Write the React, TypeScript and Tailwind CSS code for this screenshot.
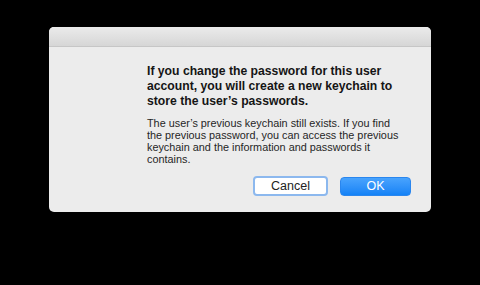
const copy = {
  heading: [
    "If you change the password for this user",
    "account, you will create a new keychain to",
    "store the user\u2019s passwords.",
  ],
  body: [
    "The user\u2019s previous keychain still exists. If you find",
    "the previous password, you can access the previous",
    "keychain and the information and passwords it",
    "contains.",
  ],
};

export default function App() {
  return (
    <div className="min-h-screen w-[480px] bg-black pt-[27px] pl-[49px] font-['Liberation_Sans',sans-serif]">
      <Dialog />
    </div>
  );
}

const Dialog = () => {
  return (
    <div className="w-[382px] h-[185px] rounded-[5px] overflow-hidden bg-[#ececec] flex flex-col">
      {/* Title bar */}
      <div className="h-[20px] bg-gradient-to-b from-[#ebebeb] to-[#d6d6d6] border-b border-[#c6c6c6]" />
      <div className="pl-[98px] pr-[20px] pt-[17px] flex flex-col">
        <h2 className="text-[12.2px] leading-[15px] font-bold text-[#151515] whitespace-nowrap">
          {copy.heading.map((line) => (
            <div key={line}>{line}</div>
          ))}
        </h2>
        <p className="mt-[8px] text-[10.85px] leading-[12px] text-[#262626] whitespace-nowrap">
          {copy.body.map((line) => (
            <span key={line} className="block">
              {line}
            </span>
          ))}
        </p>
        <div className="mt-[11px] flex justify-end gap-[12px]">
          <button className="w-[75px] h-[20px] rounded-[4px] bg-white border-[2px] border-[#8cb8ee] text-[12.5px] text-[#222] leading-none">
            Cancel
          </button>
          <button className="w-[71px] h-[19px] mt-[1px] rounded-[4px] bg-gradient-to-b from-[#48a3fd] to-[#1282f6] border border-[#2a86ee] text-[12.5px] text-white leading-none">
            OK
          </button>
        </div>
      </div>
    </div>
  );
};
